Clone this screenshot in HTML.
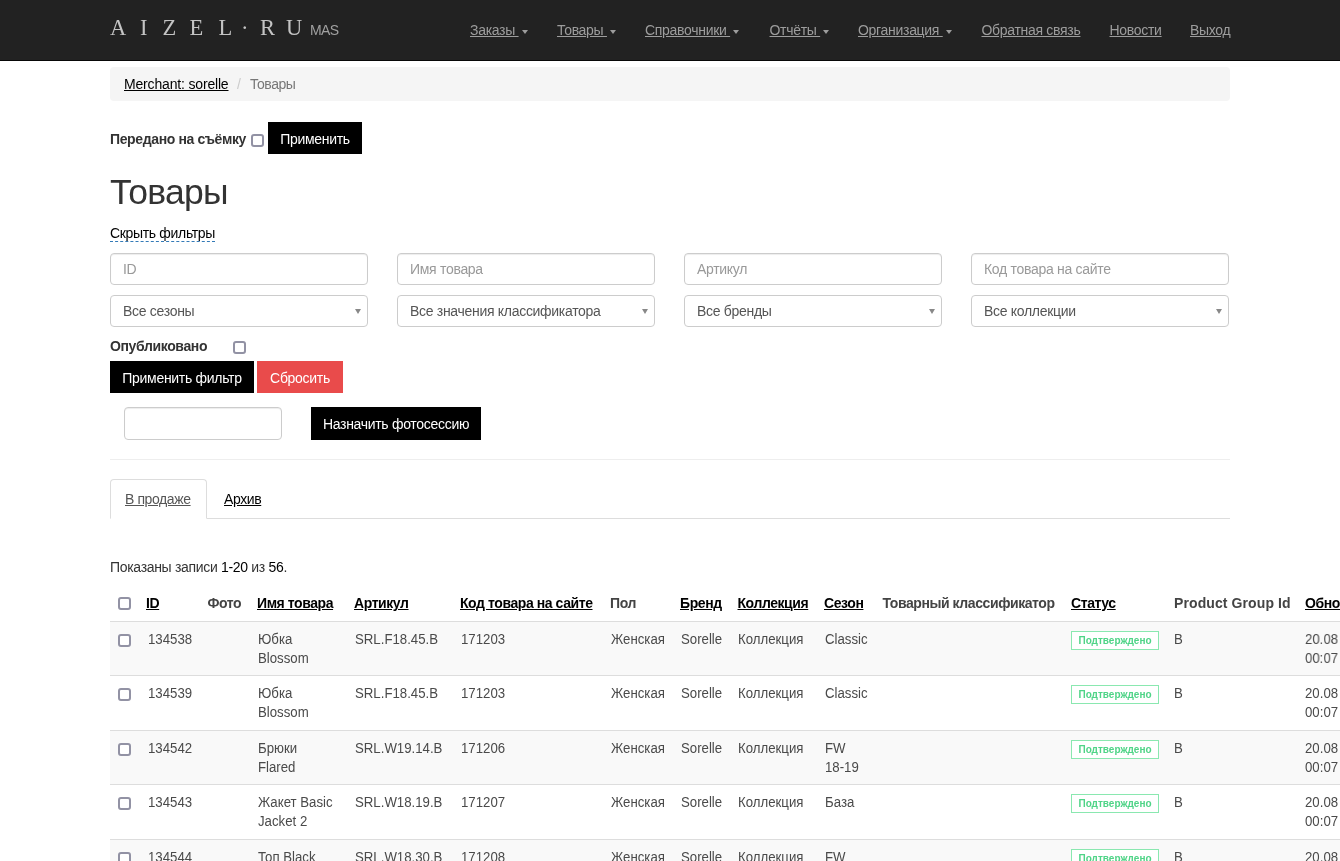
<!DOCTYPE html>
<html><head><meta charset="utf-8"><title>Товары</title>
<style>
*{box-sizing:border-box}
html,body{margin:0;padding:0}
body{font-family:"Liberation Sans",sans-serif;font-size:14px;line-height:20px;color:#333;background:#fff;width:1340px;height:861px;overflow:hidden;position:relative}
.a{position:absolute;white-space:nowrap}
u{text-decoration:underline}
.nav{position:absolute;left:0;top:0;width:1340px;height:61px;background:#222;border-bottom:1px solid #080808}
.lg{position:absolute;top:13px;font-family:"Liberation Serif",serif;font-size:22.5px;line-height:30px;color:#c4c4c4}
.mas{position:absolute;left:310px;top:20px;font-size:14px;line-height:20px;color:#a0a0a0;letter-spacing:-0.6px}
.nl{position:absolute;top:20px;color:#9d9d9d;font-size:14px;letter-spacing:-0.3px;text-decoration:underline;white-space:nowrap}
.caret{position:absolute;top:10px;width:0;height:0;border-top:4px solid #9d9d9d;border-left:3.5px solid transparent;border-right:3.5px solid transparent}
.bc{position:absolute;left:110px;top:67px;width:1120px;height:34px;background:#f5f5f5;border-radius:4px}
.btn{position:absolute;background:#000;color:#fff;font-size:14px;line-height:20px;text-align:center;padding:6.5px 0 0;height:32px;white-space:nowrap;letter-spacing:-0.3px}
.cb{position:absolute;width:13px;height:13px;border:2px solid #9292a4;border-radius:3px;background:#fff}
.b{font-weight:bold}
.inp{position:absolute;height:32px;border:1px solid #ccc;border-radius:4px;background:#fff;color:#999;padding:5px 12px;white-space:nowrap;letter-spacing:-0.3px;box-shadow:inset 0 1px 1px rgba(0,0,0,.075)}
.sel{position:absolute;height:32px;border:1px solid #ccc;border-radius:4px;background:#fff;color:#555;padding:5px 12px;white-space:nowrap;letter-spacing:-0.3px}
.sel:after{content:"";position:absolute;right:6px;top:13px;border-top:5px solid #888;border-left:3px solid transparent;border-right:3px solid transparent}
.th{position:absolute;font-weight:bold;color:#000;letter-spacing:-0.42px;white-space:nowrap;line-height:20px}
.th.n{color:#444;text-decoration:none}
.th.l{text-decoration:underline}
.td{position:absolute;color:#4a4a4a;font-size:14.7px;letter-spacing:0;white-space:nowrap;line-height:19px;transform:scaleX(0.9);transform-origin:0 0}
.hl{position:absolute;left:110px;width:1230px;height:1px;background:#ddd}
.row{position:absolute;left:110px;width:1230px}
.badge{position:absolute;width:88px;height:19px;border:1px solid #8ae8b0;background:#fff;color:#4fd487;font-size:10px;font-weight:bold;line-height:17px;text-align:center}
</style></head><body><div style="position:absolute;left:0;top:0;width:1340px;height:861px;will-change:transform">
<div class="nav"><span class="lg" style="left:110px">A</span><span class="lg" style="left:140px">I</span><span class="lg" style="left:162.5px">Z</span><span class="lg" style="left:189.5px">E</span><span class="lg" style="left:218.5px">L</span><span class="lg" style="left:241px">·</span><span class="lg" style="left:260px">R</span><span class="lg" style="left:286px">U</span><span class="mas">MAS</span><span class="nl" style="left:470px">Заказы&nbsp;<span class="caret" style="left:100%;margin-left:3px"></span></span><span class="nl" style="left:557px">Товары&nbsp;<span class="caret" style="left:100%;margin-left:3px"></span></span><span class="nl" style="left:645px">Справочники&nbsp;<span class="caret" style="left:100%;margin-left:3px"></span></span><span class="nl" style="left:769.5px">Отчёты&nbsp;<span class="caret" style="left:100%;margin-left:3px"></span></span><span class="nl" style="left:858px">Организация&nbsp;<span class="caret" style="left:100%;margin-left:3px"></span></span><span class="nl" style="left:981.5px">Обратная связь</span><span class="nl" style="left:1109.5px">Новости</span><span class="nl" style="left:1190px">Выход</span></div>
<div class="bc"></div><span class="a" style="left:124px;top:74px;color:#000;letter-spacing:-0.17px;text-decoration:underline">Merchant: sorelle</span><span class="a" style="left:237px;top:74px;color:#ccc">/</span><span class="a" style="left:250px;top:74px;color:#777;letter-spacing:-0.45px">Товары</span>
<span class="a b" style="left:110px;top:129px;letter-spacing:-0.37px">Передано на съёмку</span><div class="cb" style="left:251px;top:134px"></div><div class="btn" style="left:268px;top:122px;width:94px">Применить</div>
<span class="a" style="left:110px;top:169.5px;font-size:35.5px;line-height:44px;color:#333;letter-spacing:-0.7px">Товары</span><span class="a" style="left:110px;top:225px;color:#000;letter-spacing:-0.33px;border-bottom:1px dashed #337ab7;line-height:16px">Скрыть фильтры</span>
<div class="inp" style="left:110px;top:253px;width:258px">ID</div><div class="inp" style="left:397px;top:253px;width:258px">Имя товара</div><div class="inp" style="left:684px;top:253px;width:258px">Артикул</div><div class="inp" style="left:971px;top:253px;width:258px">Код товара на сайте</div><div class="sel" style="left:110px;top:295px;width:258px">Все сезоны</div><div class="sel" style="left:397px;top:295px;width:258px">Все значения классификатора</div><div class="sel" style="left:684px;top:295px;width:258px">Все бренды</div><div class="sel" style="left:971px;top:295px;width:258px">Все коллекции</div>
<span class="a b" style="left:110px;top:336px;letter-spacing:-0.37px">Опубликовано</span><div class="cb" style="left:233px;top:341px"></div><div class="btn" style="left:110px;top:361px;width:144px">Применить фильтр</div><div class="btn" style="left:257px;top:361px;width:86px;background:#e94b4b">Сбросить</div><div class="inp" style="left:124px;top:407px;width:158px;height:33px"></div><div class="btn" style="left:311px;top:407px;width:170px;height:33px">Назначить фотосессию</div><div class="a" style="left:110px;top:459px;width:1120px;height:1px;background:#eee"></div>
<div class="a" style="left:110px;top:518px;width:1120px;height:1px;background:#ddd"></div><div class="a" style="left:110px;top:479px;width:97px;height:40px;background:#fff;border:1px solid #ddd;border-bottom-color:transparent;border-radius:4px 4px 0 0"></div><span class="a" style="left:125px;top:489px;color:#555;letter-spacing:-0.4px;text-decoration:underline">В продаже</span><span class="a" style="left:224px;top:489px;color:#000;letter-spacing:-0.4px;text-decoration:underline">Архив</span>
<span class="a" style="left:110px;top:557px;color:#333;letter-spacing:-0.32px">Показаны записи <span style="color:#000">1-20</span> из <span style="color:#000">56</span>.</span>
<div class="cb" style="left:118px;top:597px"></div><span class="th l" style="left:146px;top:593px">ID</span><span class="th n" style="left:207.5px;top:593px">Фото</span><span class="th l" style="left:257px;top:593px">Имя товара</span><span class="th l" style="left:354px;top:593px">Артикул</span><span class="th l" style="left:460px;top:593px">Код товара на сайте</span><span class="th n" style="left:610px;top:593px">Пол</span><span class="th l" style="left:680px;top:593px">Бренд</span><span class="th l" style="left:737.5px;top:593px">Коллекция</span><span class="th l" style="left:824px;top:593px">Сезон</span><span class="th n" style="left:882.5px;top:593px">Товарный классификатор</span><span class="th l" style="left:1071px;top:593px">Статус</span><span class="th n" style="left:1174px;top:593px;letter-spacing:0.1px">Product Group Id</span><span class="th l" style="left:1305px;top:593px">Обновлено</span>
<div class="row" style="top:621px;height:54px;background:#f9f9f9;border-top:1px solid #ddd"></div><div class="cb" style="left:118px;top:633.5px"></div><span class="td" style="left:147.5px;top:630px">134538</span><span class="td" style="left:257.5px;top:630px">Юбка<br>Blossom</span><span class="td" style="left:354.5px;top:630px">SRL.F18.45.B</span><span class="td" style="left:460.5px;top:630px">171203</span><span class="td" style="left:610.5px;top:630px">Женская</span><span class="td" style="left:680.5px;top:630px">Sorelle</span><span class="td" style="left:737.5px;top:630px">Коллекция</span><span class="td" style="left:824.5px;top:630px">Classic</span><div class="badge" style="left:1071px;top:631px">Подтверждено</div><span class="td" style="left:1174px;top:630px">B</span><span class="td" style="left:1305px;top:630px">20.08<br>00:07</span>
<div class="row" style="top:675px;height:55px;background:#fff;border-top:1px solid #ddd"></div><div class="cb" style="left:118px;top:687.5px"></div><span class="td" style="left:147.5px;top:684px">134539</span><span class="td" style="left:257.5px;top:684px">Юбка<br>Blossom</span><span class="td" style="left:354.5px;top:684px">SRL.F18.45.B</span><span class="td" style="left:460.5px;top:684px">171203</span><span class="td" style="left:610.5px;top:684px">Женская</span><span class="td" style="left:680.5px;top:684px">Sorelle</span><span class="td" style="left:737.5px;top:684px">Коллекция</span><span class="td" style="left:824.5px;top:684px">Classic</span><div class="badge" style="left:1071px;top:685px">Подтверждено</div><span class="td" style="left:1174px;top:684px">B</span><span class="td" style="left:1305px;top:684px">20.08<br>00:07</span>
<div class="row" style="top:730px;height:54px;background:#f9f9f9;border-top:1px solid #ddd"></div><div class="cb" style="left:118px;top:742.5px"></div><span class="td" style="left:147.5px;top:739px">134542</span><span class="td" style="left:257.5px;top:739px">Брюки<br>Flared</span><span class="td" style="left:354.5px;top:739px">SRL.W19.14.B</span><span class="td" style="left:460.5px;top:739px">171206</span><span class="td" style="left:610.5px;top:739px">Женская</span><span class="td" style="left:680.5px;top:739px">Sorelle</span><span class="td" style="left:737.5px;top:739px">Коллекция</span><span class="td" style="left:824.5px;top:739px">FW<br>18-19</span><div class="badge" style="left:1071px;top:740px">Подтверждено</div><span class="td" style="left:1174px;top:739px">B</span><span class="td" style="left:1305px;top:739px">20.08<br>00:07</span>
<div class="row" style="top:784px;height:55px;background:#fff;border-top:1px solid #ddd"></div><div class="cb" style="left:118px;top:796.5px"></div><span class="td" style="left:147.5px;top:793px">134543</span><span class="td" style="left:257.5px;top:793px">Жакет Basic<br>Jacket 2</span><span class="td" style="left:354.5px;top:793px">SRL.W18.19.B</span><span class="td" style="left:460.5px;top:793px">171207</span><span class="td" style="left:610.5px;top:793px">Женская</span><span class="td" style="left:680.5px;top:793px">Sorelle</span><span class="td" style="left:737.5px;top:793px">Коллекция</span><span class="td" style="left:824.5px;top:793px">База</span><div class="badge" style="left:1071px;top:794px">Подтверждено</div><span class="td" style="left:1174px;top:793px">B</span><span class="td" style="left:1305px;top:793px">20.08<br>00:07</span>
<div class="row" style="top:839px;height:55px;background:#f9f9f9;border-top:1px solid #ddd"></div><div class="cb" style="left:118px;top:851.5px"></div><span class="td" style="left:147.5px;top:848px">134544</span><span class="td" style="left:257.5px;top:848px">Топ Black<br></span><span class="td" style="left:354.5px;top:848px">SRL.W18.30.B</span><span class="td" style="left:460.5px;top:848px">171208</span><span class="td" style="left:610.5px;top:848px">Женская</span><span class="td" style="left:680.5px;top:848px">Sorelle</span><span class="td" style="left:737.5px;top:848px">Коллекция</span><span class="td" style="left:824.5px;top:848px">FW<br></span><div class="badge" style="left:1071px;top:849px">Подтверждено</div><span class="td" style="left:1174px;top:848px">B</span><span class="td" style="left:1305px;top:848px">20.08<br>00:07</span>
</div></body></html>
